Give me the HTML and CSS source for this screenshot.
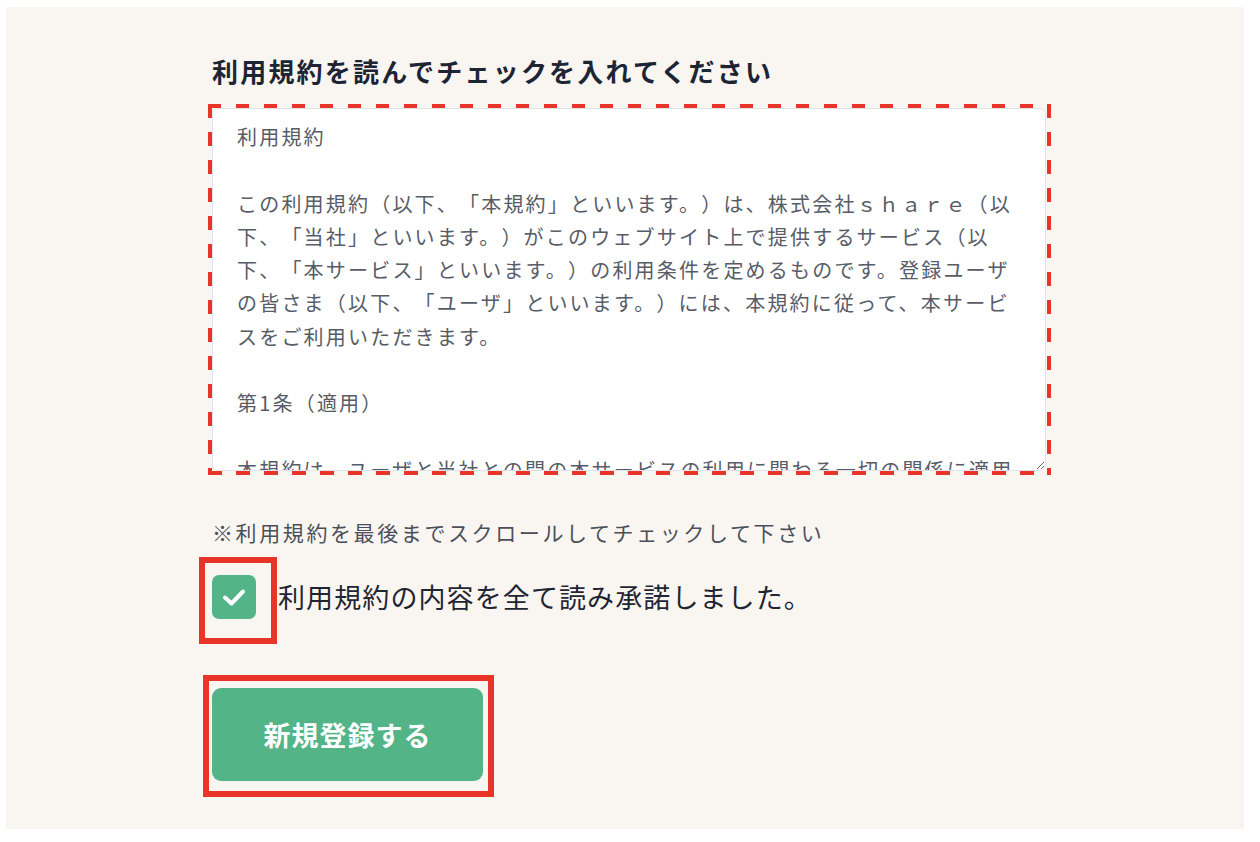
FILE: index.html
```html
<!DOCTYPE html>
<html lang="ja">
<head>
<meta charset="utf-8">
<title>利用規約</title>
<link rel="stylesheet" href="styles.css">
</head>
<body>
<main class="panel">
  <form class="form">
    <h2 class="title">利用規約を読んでチェックを入れてください</h2>
    <div class="terms-wrap">
      <textarea class="terms" readonly>利用規約

この利用規約（以下、「本規約」といいます。）は、株式会社ｓｈａｒｅ（以下、「当社」といいます。）がこのウェブサイト上で提供するサービス（以下、「本サービス」といいます。）の利用条件を定めるものです。登録ユーザの皆さま（以下、「ユーザ」といいます。）には、本規約に従って、本サービスをご利用いただきます。

第1条（適用）

本規約は、ユーザと当社との間の本サービスの利用に関わる一切の関係に適用されるものとします。</textarea>
    </div>
    <p class="note">※利用規約を最後までスクロールしてチェックして下さい</p>
    <label class="agree">
      <span class="check-wrap">
        <span class="checkbox">
          <svg viewBox="0 0 44 44" width="44" height="44" aria-hidden="true">
            <polyline points="13,22.5 19.5,28.5 31,16.5" fill="none" stroke="#ffffff" stroke-width="4" stroke-linecap="round" stroke-linejoin="round"/>
          </svg>
        </span>
      </span>
      <span class="agree-text">利用規約の内容を全て読み承諾しました。</span>
    </label>
    <div class="submit-wrap">
      <button type="button" class="submit">新規登録する</button>
    </div>
  </form>
</main>
</body>
</html>
```

FILE: styles.css
```css
html, body {
  margin: 0;
  padding: 0;
  background: #ffffff;
}

body {
  font-family: "Noto Sans CJK JP", "Noto Sans", sans-serif;
  text-spacing-trim: space-all;
}

.panel {
  margin: 7px 16px 13px 6px;
  background: #f9f6f1;
  padding: 46px 0 48px 206px;
  height: 822px;
  box-sizing: border-box;
}

.form {
  width: 834px;
  display: flex;
  flex-direction: column;
  align-items: flex-start;
}

.title {
  margin: 0;
  font-size: 26px;
  line-height: 36px;
  font-weight: 700;
  letter-spacing: 2.2px;
  color: #1d2433;
}

.terms-wrap {
  position: relative;
  margin-top: 19px;
  width: 834px;
  height: 363px;
}

.terms-wrap::after {
  content: "";
  position: absolute;
  left: -4px;
  top: -4px;
  right: -5px;
  bottom: -4px;
  pointer-events: none;
  background:
    repeating-linear-gradient(90deg, #e9342a 0 13px, transparent 13px 28px) left top / 100% 4px no-repeat,
    repeating-linear-gradient(90deg, #e9342a 0 14px, transparent 14px 28px) left bottom / 100% 4px no-repeat,
    repeating-linear-gradient(180deg, #e9342a 0 14px, transparent 14px 28px) left top / 4px 100% no-repeat,
    repeating-linear-gradient(180deg, #e9342a 0 14px, transparent 14px 28px) right top / 4px 100% no-repeat;
}

.terms {
  display: block;
  width: 100%;
  height: 100%;
  box-sizing: border-box;
  margin: 0;
  padding: 11px 24px 0 24px;
  border: 1px solid #e1e1ec;
  border-radius: 6px;
  background: #ffffff;
  font-family: "Noto Sans CJK JP", "Noto Sans", sans-serif;
  font-size: 20px;
  line-height: 33.3px;
  letter-spacing: 2.2px;
  color: #575c66;
  resize: vertical;
  scrollbar-width: none;
  outline: none;
  text-spacing-trim: space-all;
}

.note {
  margin: 46px 0 0 0;
  font-size: 21px;
  line-height: 30px;
  letter-spacing: 2.6px;
  color: #4b4f5a;
}

.agree {
  margin-top: 28px;
  display: flex;
  align-items: center;
  gap: 22px;
  cursor: pointer;
}

.check-wrap {
  position: relative;
  display: block;
  width: 44px;
  height: 44px;
}

.check-wrap::after {
  content: "";
  position: absolute;
  left: -13px;
  top: -18px;
  width: 78px;
  height: 87px;
  border: 6px solid #e9342a;
  box-sizing: border-box;
}

.checkbox {
  display: block;
  width: 44px;
  height: 44px;
  border-radius: 7px;
  background: #53b487;
}

.checkbox svg {
  display: block;
}

.agree-text {
  font-size: 27px;
  line-height: 36px;
  letter-spacing: 1.1px;
  color: #1f2533;
}

.submit-wrap {
  position: relative;
  margin-top: 69px;
}

.submit-wrap::after {
  content: "";
  position: absolute;
  left: -9px;
  top: -13px;
  width: 291px;
  height: 122px;
  border: 6px solid #e9342a;
  box-sizing: border-box;
  pointer-events: none;
}

.submit {
  display: block;
  width: 271px;
  height: 93px;
  border: none;
  border-radius: 9px;
  background: #53b487;
  color: #ffffff;
  font-family: "Noto Sans CJK JP", "Noto Sans", sans-serif;
  font-size: 27px;
  font-weight: 700;
  letter-spacing: 1px;
  padding: 0;
  cursor: pointer;
}
```
